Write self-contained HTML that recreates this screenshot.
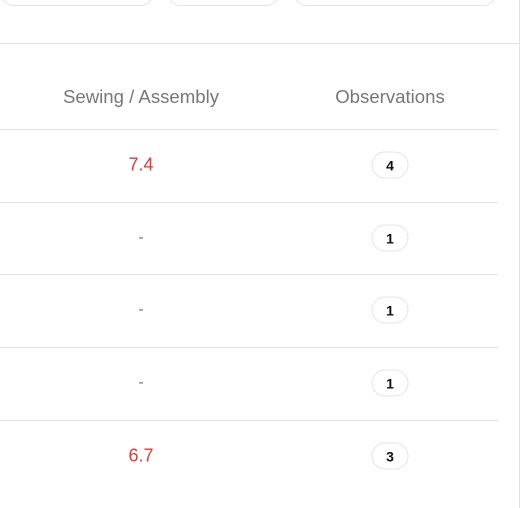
<!DOCTYPE html>
<html><head><style>
body{margin:0;width:526px;height:508px;background:#fff;font-family:"Liberation Sans",sans-serif;position:relative;overflow:hidden}
.pill{position:absolute;top:-30px;height:36px;border:1px solid #e4e4e4;border-radius:14px;box-sizing:border-box}
.vl{position:absolute;left:519px;top:0;width:1px;height:508px;background:#e4e4e4}
.hl{position:absolute;left:0;height:1px;background:#e4e4e4}
.t{position:absolute;transform:translate(-50%,-50%);white-space:nowrap}
.h{color:#777;font-size:18.6px}
.red{color:#e53935;font-size:18px}
.dash{color:#777;font-size:16px}
.b{position:absolute;width:37px;height:27px;border:1px solid #e4e4e4;border-radius:13.5px;box-sizing:border-box;transform:translate(-50%,-50%);font-weight:bold;font-size:14px;display:flex;align-items:center;justify-content:center;color:#111}
</style></head><body>
<div class="pill" style="left:0;width:154px"></div>
<div class="pill" style="left:167px;width:113px"></div>
<div class="pill" style="left:293px;width:204px"></div>
<div class="vl"></div>
<div class="hl" style="top:43px;width:520px"></div>
<div class="t h" style="left:141px;top:97px">Sewing / Assembly</div>
<div class="t h" style="left:390px;top:97px">Observations</div>
<div class="hl" style="top:129px;width:498px"></div>
<div class="hl" style="top:202px;width:498px"></div>
<div class="hl" style="top:274px;width:498px"></div>
<div class="hl" style="top:347px;width:498px"></div>
<div class="hl" style="top:420px;width:498px"></div>
<div class="t red" style="left:141px;top:165px">7.4</div><div class="b" style="left:390px;top:165px">4</div>
<div class="t dash" style="left:141px;top:238px">-</div><div class="b" style="left:390px;top:238px">1</div>
<div class="t dash" style="left:141px;top:310px">-</div><div class="b" style="left:390px;top:310px">1</div>
<div class="t dash" style="left:141px;top:383px">-</div><div class="b" style="left:390px;top:383px">1</div>
<div class="t red" style="left:141px;top:456px">6.7</div><div class="b" style="left:390px;top:456px">3</div>
</body></html>
